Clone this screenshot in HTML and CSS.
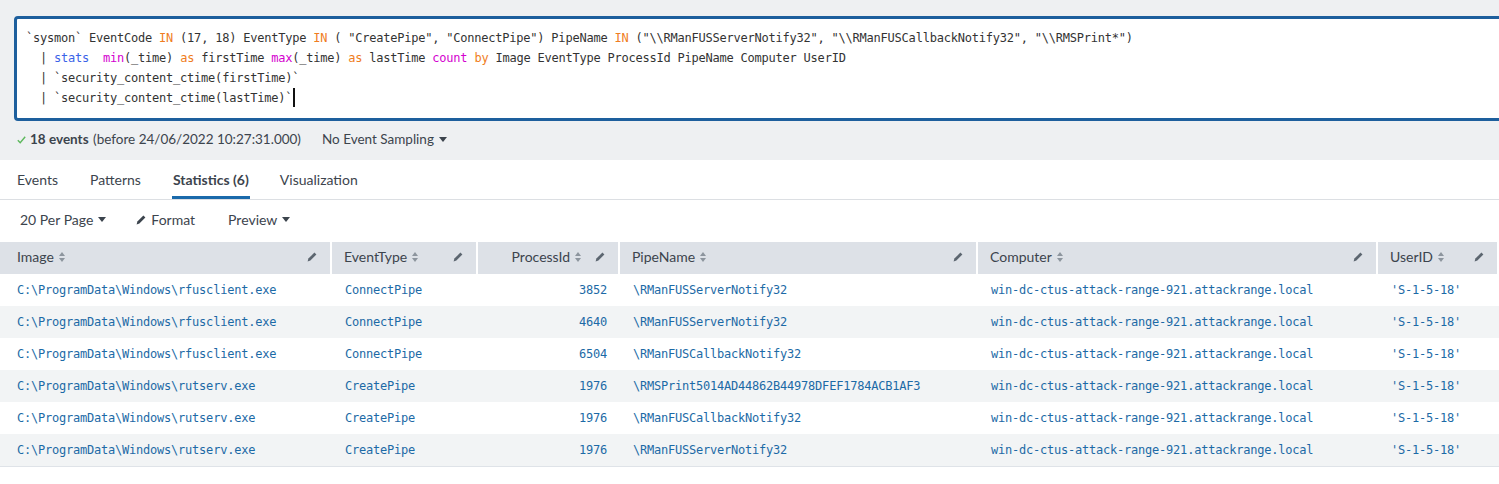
FILE: index.html
```html
<!DOCTYPE html>
<html>
<head>
<meta charset="utf-8">
<link rel="stylesheet" href="styles.css">
</head>
<body>
<div class="page">
  <div class="top">
    <div class="search">
<div class="q">`sysmon` EventCode <span class="kw">IN</span> (17, 18) EventType <span class="kw">IN</span> ( "CreatePipe", "ConnectPipe") PipeName <span class="kw">IN</span> ("\\RManFUSServerNotify32", "\\RManFUSCallbackNotify32", "\\RMSPrint*")</div>
<div class="q">  | <span class="cmd">stats</span>  <span class="fn">min</span>(_time) <span class="kw">as</span> firstTime <span class="fn">max</span>(_time) <span class="kw">as</span> lastTime <span class="fn">count</span> <span class="kw">by</span> Image EventType ProcessId PipeName Computer UserID</div>
<div class="q">  | `security_content_ctime(firstTime)`</div>
<div class="q">  | `security_content_ctime(lastTime)`<span class="cursor"></span></div>
    </div>
    <div class="status">
      <svg class="check" width="9" height="8" viewBox="0 0 9 8"><polyline points="0.8,4.3 3.2,6.8 8.2,0.8" fill="none" stroke="#5cb85c" stroke-width="1.4"/></svg>
      <span class="count"><b>18 events</b> <span class="before">(before 24/06/2022 10:27:31.000)</span></span>
      <span class="sampling">No Event Sampling <svg class="caret" width="8" height="5" viewBox="0 0 8 5"><polygon points="0,0 8,0 4,5" fill="#3c444d"/></svg></span>
    </div>
  </div>

  <div class="tabs">
    <span class="tab">Events</span>
    <span class="tab">Patterns</span>
    <span class="tab active">Statistics (6)</span>
    <span class="tab">Visualization</span>
  </div>

  <div class="toolbar">
    <span class="tool perpage">20 Per Page <svg class="caret" width="8" height="5" viewBox="0 0 8 5"><polygon points="0,0 8,0 4,5" fill="#3c444d"/></svg></span>
    <span class="tool format"><svg class="pen" width="10" height="10" viewBox="0 0 10 10"><path d="M0.6 9.4 L1.4 6.6 L7.4 0.6 L9.4 2.6 L3.4 8.6 Z" fill="#3c444d"/></svg>Format</span>
    <span class="tool preview">Preview <svg class="caret" width="8" height="5" viewBox="0 0 8 5"><polygon points="0,0 8,0 4,5" fill="#3c444d"/></svg></span>
  </div>

  <table class="grid">
    <colgroup>
      <col class="c1"><col class="c2"><col class="c3"><col class="c4"><col class="c5"><col class="c6"><col class="c7">
    </colgroup>
    <thead>
      <tr>
        <th><div class="h"><span>Image</span><i class="sort"></i><svg class="pen" width="10" height="10" viewBox="0 0 10 10"><path d="M0.6 9.4 L1.4 6.6 L7.4 0.6 L9.4 2.6 L3.4 8.6 Z"/></svg></div></th>
        <th><div class="h"><span>EventType</span><i class="sort"></i><svg class="pen" width="10" height="10" viewBox="0 0 10 10"><path d="M0.6 9.4 L1.4 6.6 L7.4 0.6 L9.4 2.6 L3.4 8.6 Z"/></svg></div></th>
        <th><div class="h right"><span>ProcessId</span><i class="sort"></i><svg class="pen" width="10" height="10" viewBox="0 0 10 10"><path d="M0.6 9.4 L1.4 6.6 L7.4 0.6 L9.4 2.6 L3.4 8.6 Z"/></svg></div></th>
        <th><div class="h"><span>PipeName</span><i class="sort"></i><svg class="pen" width="10" height="10" viewBox="0 0 10 10"><path d="M0.6 9.4 L1.4 6.6 L7.4 0.6 L9.4 2.6 L3.4 8.6 Z"/></svg></div></th>
        <th><div class="h"><span>Computer</span><i class="sort"></i><svg class="pen" width="10" height="10" viewBox="0 0 10 10"><path d="M0.6 9.4 L1.4 6.6 L7.4 0.6 L9.4 2.6 L3.4 8.6 Z"/></svg></div></th>
        <th><div class="h"><span>UserID</span><i class="sort"></i><svg class="pen" width="10" height="10" viewBox="0 0 10 10"><path d="M0.6 9.4 L1.4 6.6 L7.4 0.6 L9.4 2.6 L3.4 8.6 Z"/></svg></div></th>
        <th></th>
      </tr>
    </thead>
    <tbody>
      <tr><td>C:\ProgramData\Windows\rfusclient.exe</td><td>ConnectPipe</td><td class="num">3852</td><td>\RManFUSServerNotify32</td><td>win-dc-ctus-attack-range-921.attackrange.local</td><td>'S-1-5-18'</td><td></td></tr>
      <tr><td>C:\ProgramData\Windows\rfusclient.exe</td><td>ConnectPipe</td><td class="num">4640</td><td>\RManFUSServerNotify32</td><td>win-dc-ctus-attack-range-921.attackrange.local</td><td>'S-1-5-18'</td><td></td></tr>
      <tr><td>C:\ProgramData\Windows\rfusclient.exe</td><td>ConnectPipe</td><td class="num">6504</td><td>\RManFUSCallbackNotify32</td><td>win-dc-ctus-attack-range-921.attackrange.local</td><td>'S-1-5-18'</td><td></td></tr>
      <tr><td>C:\ProgramData\Windows\rutserv.exe</td><td>CreatePipe</td><td class="num">1976</td><td>\RMSPrint5014AD44862B44978DFEF1784ACB1AF3</td><td>win-dc-ctus-attack-range-921.attackrange.local</td><td>'S-1-5-18'</td><td></td></tr>
      <tr><td>C:\ProgramData\Windows\rutserv.exe</td><td>CreatePipe</td><td class="num">1976</td><td>\RManFUSCallbackNotify32</td><td>win-dc-ctus-attack-range-921.attackrange.local</td><td>'S-1-5-18'</td><td></td></tr>
      <tr><td>C:\ProgramData\Windows\rutserv.exe</td><td>CreatePipe</td><td class="num">1976</td><td>\RManFUSServerNotify32</td><td>win-dc-ctus-attack-range-921.attackrange.local</td><td>'S-1-5-18'</td><td></td></tr>
    </tbody>
  </table>
</div>
</body>
</html>
```

FILE: styles.css
```css
html, body {
  margin: 0;
  padding: 0;
  background: #ffffff;
  overflow: hidden;
}
body {
  font-family: Lato, "Open Sans", sans-serif;
  color: #3c444d;
  width: 1499px;
  height: 484px;
}
.page {
  width: 1499px;
  overflow: hidden;
}

/* top grey area */
.top {
  background: #eef0f2;
  padding: 16px 0 3px 14px;
}
.search {
  margin-right: -30px;
  background: #ffffff;
  border: 3px solid #1d5f9d;
  border-radius: 4px;
  padding: 9px 9px 10px 9px;
  height: 105px;
  box-sizing: border-box;
}
.q {
  font-family: "DejaVu Sans Mono", "Liberation Mono", monospace;
  font-size: 12px;
  letter-spacing: -0.22px;
  line-height: 20px;
  height: 20px;
  white-space: pre;
  color: #333333;
}
.kw { color: #ef7d22; }
.cmd { color: #3a63e8; }
.fn { color: #d400cf; }
.cursor {
  display: inline-block;
  width: 0;
  height: 19px;
  border-left: 2px solid #111;
  vertical-align: -5px;
  margin-left: 1px;
}

.status {
  display: flex;
  align-items: center;
  height: 36px;
  padding-left: 3px;
  font-size: 13.5px;
  color: #3c444d;
}
.check { margin-right: 4px; margin-top: 1px; }
.count b { font-weight: 700; }
.before { margin-left: 1px; }
.sampling {
  margin-left: 21px;
  display: inline-flex;
  align-items: center;
}
.caret { margin-left: 5px; }

/* tabs */
.tabs {
  display: flex;
  height: 40px;
  border-bottom: 1px solid #dcdfe3;
  box-sizing: border-box;
  padding-left: 17px;
  font-size: 14px;
}
.tab {
  display: flex;
  align-items: center;
  height: 39px;
  box-sizing: border-box;
  margin-right: 32px;
  color: #3c444d;
}
.tab.active {
  font-weight: 700;
  border-bottom: 3px solid #1a6aab;
  padding-top: 3px;
  padding-left: 1px;
  padding-right: 1px;
  margin-left: -1px;
  margin-right: 30px;
}

/* toolbar */
.toolbar {
  display: flex;
  align-items: center;
  height: 42px;
  box-sizing: border-box;
  padding: 0 0 3px 20px;
  font-size: 14px;
}
.tool {
  display: inline-flex;
  align-items: center;
}
.perpage { margin-right: 30px; }
.format { margin-right: 33px; }
.format .pen { margin-right: 5px; }

/* table */
.grid {
  border-collapse: collapse;
  table-layout: fixed;
  width: 1600px;
}
col.c1 { width: 331px; }
col.c2 { width: 146px; }
col.c3 { width: 142px; }
col.c4 { width: 358px; }
col.c5 { width: 400px; }
col.c6 { width: 121px; }
col.c7 { width: 102px; }

.grid th {
  background: #dde1e7;
  height: 29px;
  padding: 0 13px 3px 12px;
  text-align: left;
  font-weight: 400;
  font-size: 14px;
  color: #3c444d;
  border-left: 2px solid #ffffff;
}
.grid th:first-child {
  border-left: none;
  padding-left: 17px;
}
.h {
  display: flex;
  align-items: center;
  white-space: nowrap;
}
.h .pen {
  margin-left: auto;
  fill: #5c6670;
}
.h.right { justify-content: flex-end; }
.h.right .pen { margin-left: 13px; }
.sort {
  display: inline-block;
  position: relative;
  width: 7px;
  height: 10px;
  margin-left: 5px;
}
.sort::before, .sort::after {
  content: "";
  position: absolute;
  left: 0;
  border-left: 3.5px solid transparent;
  border-right: 3.5px solid transparent;
}
.sort::before {
  top: 0;
  border-bottom: 4px solid #8d959e;
}
.sort::after {
  bottom: 0;
  border-top: 4px solid #8d959e;
}

.grid td {
  height: 32px;
  padding: 0 12px 0 14px;
  font-family: "DejaVu Sans Mono", "Liberation Mono", monospace;
  font-size: 12px;
  letter-spacing: -0.22px;
  color: #1c6aa6;
  white-space: nowrap;
  overflow: hidden;
  box-sizing: border-box;
}
.grid td:first-child { padding-left: 17px; }
.grid td.num { text-align: right; }
.grid tbody tr:nth-child(even) td { background: #f2f4f5; }
.grid tbody tr:last-child td { border-bottom: 1px solid #dfe3e8; }
```
